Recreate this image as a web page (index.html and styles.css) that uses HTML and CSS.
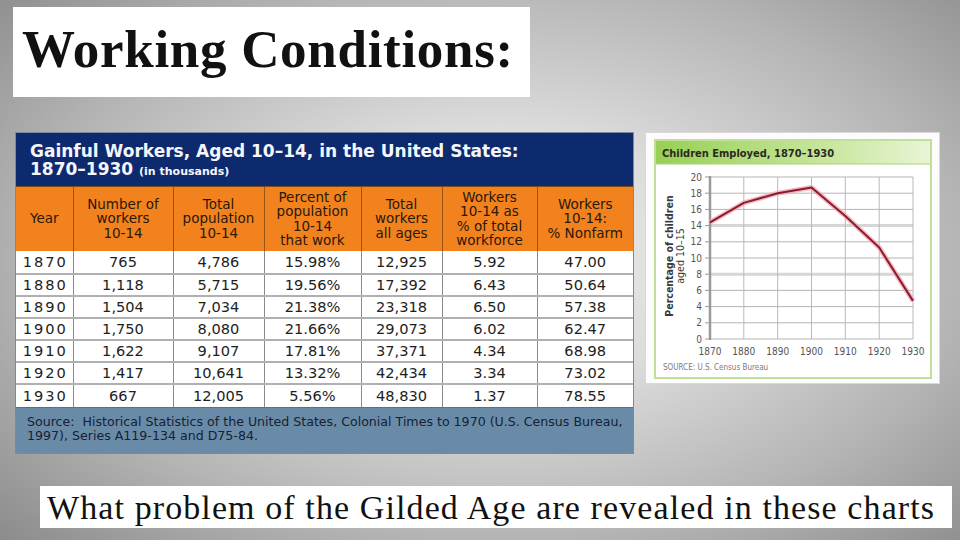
FILE: index.html
```html
<!DOCTYPE html>
<html>
<head>
<meta charset="utf-8">
<link rel="stylesheet" href="styles.css">
</head>
<body>
<div class="slide">
  <div class="title-box"><h1 class="title">Working Conditions:</h1></div>
  <div class="content">
    <div class="table-card">
      <div class="table-head">
        <div class="th-line">Gainful Workers, Aged 10–14, in the United States:</div>
        <div class="th-line">1870–1930 <span class="th-small">(in thousands)</span></div>
      </div>
      <table class="data">
        <colgroup>
          <col class="c1"><col class="c2"><col class="c3"><col class="c4"><col class="c5"><col class="c6"><col class="c7">
        </colgroup>
        <thead>
          <tr>
            <th>Year</th>
            <th>Number of<br>workers<br>10-14</th>
            <th>Total<br>population<br>10-14</th>
            <th>Percent of<br>population<br>10-14<br>that work</th>
            <th>Total<br>workers<br>all ages</th>
            <th>Workers<br>10-14 as<br>% of total<br>workforce</th>
            <th>Workers<br>10-14:<br>% Nonfarm</th>
          </tr>
        </thead>
        <tbody>
          <tr><td class="yr">1870</td><td>765</td><td>4,786</td><td>15.98%</td><td>12,925</td><td>5.92</td><td>47.00</td></tr>
          <tr><td class="yr">1880</td><td>1,118</td><td>5,715</td><td>19.56%</td><td>17,392</td><td>6.43</td><td>50.64</td></tr>
          <tr><td class="yr">1890</td><td>1,504</td><td>7,034</td><td>21.38%</td><td>23,318</td><td>6.50</td><td>57.38</td></tr>
          <tr><td class="yr">1900</td><td>1,750</td><td>8,080</td><td>21.66%</td><td>29,073</td><td>6.02</td><td>62.47</td></tr>
          <tr><td class="yr">1910</td><td>1,622</td><td>9,107</td><td>17.81%</td><td>37,371</td><td>4.34</td><td>68.98</td></tr>
          <tr><td class="yr">1920</td><td>1,417</td><td>10,641</td><td>13.32%</td><td>42,434</td><td>3.34</td><td>73.02</td></tr>
          <tr><td class="yr">1930</td><td>667</td><td>12,005</td><td>5.56%</td><td>48,830</td><td>1.37</td><td>78.55</td></tr>
        </tbody>
      </table>
      <div class="source">Source:&nbsp; Historical Statistics of the United States, Colonial Times to 1970 (U.S. Census Bureau, 1997), Series A119-134 and D75-84.</div>
    </div>
    <div class="chart-card">
      <svg class="chart" width="293" height="250" viewBox="0 0 293 250">
        <defs>
          <linearGradient id="hdr" x1="0" y1="0" x2="1" y2="0">
            <stop offset="0" stop-color="#98cf55"/>
            <stop offset="0.6" stop-color="#c6e59a"/>
            <stop offset="1" stop-color="#e8f5d6"/>
          </linearGradient>
        </defs>
        <rect x="9" y="7" width="276" height="238" fill="#fff" stroke="#c0e09a" stroke-width="2"/>
        <rect x="10" y="8" width="274" height="23" fill="url(#hdr)"/>
        <line x1="10" y1="31" x2="284" y2="31" stroke="#a8d377" stroke-width="1"/>
        <text x="16" y="24" class="ctitle">Children Employed, 1870–1930</text>
        <g class="hgrid">
          <line x1="64" y1="44" x2="267" y2="44"/>
          <line x1="64" y1="60.2" x2="267" y2="60.2"/>
          <line x1="64" y1="76.4" x2="267" y2="76.4"/>
          <line x1="64" y1="92.6" x2="267" y2="92.6" class="thick"/>
          <line x1="64" y1="108.8" x2="267" y2="108.8"/>
          <line x1="64" y1="125" x2="267" y2="125"/>
          <line x1="64" y1="141.2" x2="267" y2="141.2" class="thick"/>
          <line x1="64" y1="157.4" x2="267" y2="157.4"/>
          <line x1="64" y1="173.6" x2="267" y2="173.6"/>
          <line x1="64" y1="189.8" x2="267" y2="189.8"/>
          <line x1="64" y1="206" x2="267" y2="206"/>
        </g>
        <g class="vgrid">
          <line x1="97.8" y1="44" x2="97.8" y2="206"/>
          <line x1="131.7" y1="44" x2="131.7" y2="206"/>
          <line x1="165.5" y1="44" x2="165.5" y2="206"/>
          <line x1="199.3" y1="44" x2="199.3" y2="206"/>
          <line x1="233.2" y1="44" x2="233.2" y2="206"/>
          <line x1="267" y1="44" x2="267" y2="206"/>
        </g>
        <line x1="64" y1="43" x2="64" y2="207" stroke="#9a9a9a" stroke-width="2.5"/>
        <g class="ticks">
          <line x1="59" y1="44" x2="64" y2="44"/><line x1="59" y1="60.2" x2="64" y2="60.2"/>
          <line x1="59" y1="76.4" x2="64" y2="76.4"/><line x1="59" y1="92.6" x2="64" y2="92.6"/>
          <line x1="59" y1="108.8" x2="64" y2="108.8"/><line x1="59" y1="125" x2="64" y2="125"/>
          <line x1="59" y1="141.2" x2="64" y2="141.2"/><line x1="59" y1="157.4" x2="64" y2="157.4"/>
          <line x1="59" y1="173.6" x2="64" y2="173.6"/><line x1="59" y1="189.8" x2="64" y2="189.8"/>
          <line x1="59" y1="206" x2="64" y2="206"/>
        </g>
        <g class="ylab">
          <text x="56" y="47.5">20</text><text x="56" y="63.7">18</text>
          <text x="56" y="79.9">16</text><text x="56" y="96.1">14</text>
          <text x="56" y="112.3">12</text><text x="56" y="128.5">10</text>
          <text x="56" y="144.7">8</text><text x="56" y="160.9">6</text>
          <text x="56" y="177.1">4</text><text x="56" y="193.3">2</text>
          <text x="56" y="209.5">0</text>
        </g>
        <g class="xlab">
          <text x="64" y="222">1870</text><text x="97.8" y="222">1880</text>
          <text x="131.7" y="222">1890</text><text x="165.5" y="222">1900</text>
          <text x="199.3" y="222">1910</text><text x="233.2" y="222">1920</text>
          <text x="267" y="222">1930</text>
        </g>
        <g transform="translate(0,123) rotate(-90)">
          <text x="0" y="27" class="axt1">Percentage of children</text>
          <text x="0" y="38" class="axt2">aged 10–15</text>
        </g>
        <polyline class="glow" points="64,89.4 97.8,69.9 131.7,60.2 165.5,54.5 199.3,82.9 233.2,114.5 267,167.9"/>
        <polyline class="line" points="64,89.4 97.8,69.9 131.7,60.2 165.5,54.5 199.3,82.9 233.2,114.5 267,167.9"/>
        <text x="17" y="237" class="csrc">SOURCE: U.S. Census Bureau</text>
      </svg>
    </div>
  </div>
  <div class="question"><p class="qtext">What problem of the Gilded Age are revealed in these charts</p></div>
</div>
</body>
</html>
```
FILE: styles.css
```css
html, body {
  margin: 0;
  padding: 0;
}
body {
  width: 960px;
  height: 540px;
  overflow: hidden;
}
.slide {
  width: 960px;
  height: 540px;
  box-sizing: border-box;
  padding-top: 7px;
  background: radial-gradient(ellipse 75% 80% at 52% 48%, #ebebeb 0%, #dcdcdc 30%, #b4b4b4 65%, #858585 100%);
  display: flex;
  flex-direction: column;
}
.title-box {
  margin-left: 13px;
  width: 517px;
  height: 90px;
  background: #fff;
  display: flex;
  align-items: center;
}
.title {
  margin: 0 0 0 9px;
  font-family: "Liberation Serif", "Times New Roman", serif;
  font-weight: bold;
  font-size: 53px;
  letter-spacing: 0.7px;
  line-height: 1;
  color: #111;
  padding-bottom: 6px;
}
.content {
  display: flex;
  align-items: flex-start;
  margin-top: 36px;
  margin-left: 16px;
  gap: 13px;
}
.table-card {
  width: 617px;
  height: 320px;
  background: #fff;
  font-family: "DejaVu Sans", Verdana, sans-serif;
  display: flex;
  flex-direction: column;
  box-shadow: 0 0 0 1px #7c8a98;
}
.table-head {
  height: 53px;
  box-sizing: border-box;
  background: #0d2a6e;
  color: #f4f6fb;
  padding: 9px 0 0 14px;
  font-weight: bold;
  font-size: 17px;
  line-height: 18px;
}
.th-small {
  font-size: 11px;
}
.data {
  border-collapse: collapse;
  width: 617px;
  table-layout: fixed;
}
.c1 { width: 57px; }
.c2 { width: 100px; }
.c3 { width: 91px; }
.c4 { width: 97px; }
.c5 { width: 81px; }
.c6 { width: 95px; }
.c7 { width: 96px; }
.data th {
  background: #f2821e;
  color: #2a1808;
  font-weight: normal;
  font-size: 13.5px;
  line-height: 14.6px;
  height: 64px;
  padding: 0;
  box-sizing: border-box;
  border-left: 1px solid #9a5412;
  border-top: 1px solid #7a4a18;
  vertical-align: middle;
}
.data th:first-child { border-left: none; }
.data td {
  height: 20px;
  padding: 0;
  text-align: center;
  font-size: 14.6px;
  color: #1e1e1e;
  border-left: 1px solid #8a8a8a;
  border-top: 2px solid #b0b0b0;
  line-height: 20px;
}
.data tbody tr:first-child td { border-top: none; height: 22px; }
.data tbody tr:last-child td { height: 22px; }
.data td:first-child { border-left: none; }
.data td.yr { letter-spacing: 2px; padding-left: 2px; }
.source {
  flex: 1;
  background: #6a8ba8;
  color: #142234;
  font-size: 12.6px;
  line-height: 14px;
  padding: 7px 8px 0 11px;
  border-top: 1px solid #55708a;
}
.chart-card {
  width: 293px;
  height: 250px;
  background: #fcfcfc;
  box-shadow: 0 0 0 1px #d8d8d8;
}
.chart { display: block; }
.ctitle {
  font-family: "DejaVu Sans Condensed", "DejaVu Sans", sans-serif;
  font-weight: bold;
  font-size: 11px;
  fill: #2a2a20;
}
.hgrid line { stroke: #b5b5b5; stroke-width: 1; }
.hgrid line.thick { stroke: #d6d6d6; stroke-width: 3; }
.vgrid line { stroke: #b9b9b9; stroke-width: 1; }
.ticks line { stroke: #999; stroke-width: 1; }
.ylab text {
  font-family: "DejaVu Sans Condensed", sans-serif;
  font-size: 10px;
  fill: #555;
  text-anchor: end;
}
.xlab text {
  font-family: "DejaVu Sans Condensed", sans-serif;
  font-size: 10px;
  fill: #555;
  text-anchor: middle;
}
.axt1 {
  font-family: "DejaVu Sans Condensed", sans-serif;
  font-size: 10.5px;
  font-weight: bold;
  fill: #3a3a3a;
  text-anchor: middle;
}
.axt2 {
  font-family: "DejaVu Sans Condensed", sans-serif;
  font-size: 10.5px;
  fill: #3a3a3a;
  text-anchor: middle;
}
.glow { fill: none; stroke: #f4a8b8; stroke-width: 5; stroke-linejoin: round; opacity: 0.8; }
.line { fill: none; stroke: #8a1c2c; stroke-width: 2; stroke-linejoin: round; }
.csrc {
  font-family: "DejaVu Sans Condensed", sans-serif;
  font-size: 8px;
  fill: #7a7a7a;
}
.question {
  margin-top: 33px;
  margin-left: 40px;
  width: 912px;
  height: 42px;
  background: #fff;
  display: flex;
  align-items: center;
}
.qtext {
  margin: 0 0 0 7px;
  font-family: "Liberation Serif", "Times New Roman", serif;
  font-size: 34px;
  letter-spacing: 1.1px;
  line-height: 1;
  color: #111;
  padding-top: 1px;
}
```
